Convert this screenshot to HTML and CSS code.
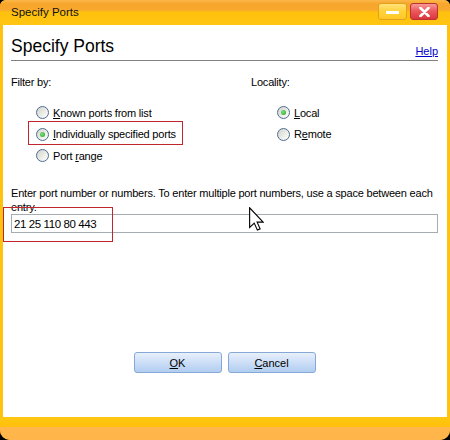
FILE: index.html
```html
<!DOCTYPE html>
<html>
<head>
<meta charset="utf-8">
<title>Specify Ports</title>
<link rel="stylesheet" href="styles.css">
</head>
<body>
<div class="window">
  <div class="titlebar">
    <span class="title">Specify Ports</span>
    <div class="controls">
      <span class="tbtn min"><span class="bar"></span></span>
      <span class="tbtn close">
        <svg width="11" height="10" viewBox="0 0 11 10"><path d="M1.5 1 L9.5 9 M9.5 1 L1.5 9" stroke="#fff" stroke-width="2.6" stroke-linecap="round"/></svg>
      </span>
    </div>
  </div>
  <div class="client">
    <div class="header">
      <h1>Specify Ports</h1>
      <a class="help">Help</a>
    </div>
    <div class="options">
      <div class="col filter">
        <div class="label">Filter by:</div>
        <div class="radios">
          <div class="radio-row"><span class="radio"></span><span><u>K</u>nown ports from list</span></div>
          <div class="radio-row"><span class="radio checked"></span><span><u>I</u>ndividually specified ports</span><span class="annot annot-1"></span></div>
          <div class="radio-row"><span class="radio"></span><span>Port <u>r</u>ange</span></div>
        </div>
      </div>
      <div class="col locality">
        <div class="label">Locality:</div>
        <div class="radios loc">
          <div class="radio-row"><span class="radio checked"></span><span><u>L</u>ocal</span></div>
          <div class="radio-row"><span class="radio"></span><span>R<u>e</u>mote</span></div>
        </div>
      </div>
    </div>
    <p class="instr">Enter port number or numbers. To enter multiple port numbers, use a space between each entry.</p>
    <div class="field">
      <input type="text" value="21 25 110 80 443">
      <span class="annot annot-2"></span>
    </div>
    <div class="buttons">
      <button class="btn"><u>O</u>K</button>
      <button class="btn"><u>C</u>ancel</button>
    </div>
    <svg class="cursor" width="15" height="24" viewBox="0 0 12 19"><path d="M0.5 0.5 V16.3 L4.2 12.8 L6.7 18.4 L8.9 17.4 L6.5 12 H11.3 Z" fill="#fff" stroke="#000" stroke-width="0.9" stroke-linejoin="miter"/></svg>
  </div>
  <div class="bottombar"></div>
</div>
</body>
</html>
```

FILE: styles.css
```css
body {
  margin: 0;
  background: #000;
  font-family: "Liberation Sans", Arial, sans-serif;
  font-size: 11px;
  letter-spacing: -0.2px;
  color: #000;
}

.window {
  width: 450px;
  height: 440px;
  display: flex;
  flex-direction: column;
  background: #ffc20e;
  border-radius: 6px 6px 10px 10px;
  overflow: hidden;
}

.titlebar {
  height: 25px;
  flex: none;
  box-sizing: border-box;
  display: flex;
  justify-content: space-between;
  align-items: flex-start;
  padding: 0 12px 0 11px;
  background: linear-gradient(#fbb849 0px, #f7a52c 4px, #f8a82e 10px, #ffc10d 12px, #ffc512 25px);
}

.title {
  font-size: 11.5px;
  letter-spacing: 0;
  line-height: 13px;
  margin-top: 6px;
  color: #111;
}

.controls {
  display: flex;
  gap: 3px;
  margin-top: 3px;
}

.tbtn {
  height: 17px;
  box-sizing: border-box;
  border-radius: 3px;
  display: flex;
  align-items: center;
  justify-content: center;
}

.min {
  width: 29px;
  background: linear-gradient(#ffe27a, #ffd23a 50%, #ffc825);
  border: 1px solid #e3a11c;
}

.min .bar {
  width: 13px;
  height: 3px;
  background: #fff;
  margin-top: 1px;
}

.close {
  width: 28px;
  background: linear-gradient(#f79a98, #ec5a5e 45%, #dc363d);
  border: 1px solid #b83232;
}

.client {
  flex: 1;
  margin: 0 3px;
  background: #fff;
  position: relative;
  padding: 10px 9px 0 8px;
  display: flex;
  flex-direction: column;
}

.header {
  display: flex;
  justify-content: space-between;
  align-items: flex-end;
  padding-bottom: 3px;
  border-bottom: 1px solid #808080;
}

.header h1 {
  margin: 0;
  font-size: 17.5px;
  font-weight: normal;
  line-height: 22px;
  letter-spacing: 0;
}

.help {
  color: #0000cc;
  text-decoration: underline;
  line-height: 13px;
  letter-spacing: 0;
  margin-bottom: -1px;
}

.options {
  display: flex;
  margin-top: 14px;
}

.filter {
  width: 240px;
}

.label {
  line-height: 14px;
}

.radios {
  margin-top: 13px;
  padding-left: 25px;
}

.radios.loc {
  padding-left: 26px;
}

.radio-row {
  display: flex;
  align-items: center;
  gap: 4px;
  height: 21.5px;
  position: relative;
}

.radio {
  flex: none;
  width: 13px;
  height: 13px;
  box-sizing: border-box;
  border-radius: 50%;
  border: 1px solid #4f6c90;
  background: linear-gradient(135deg, #d2d2cc 0%, #ecece8 55%, #ffffff 100%);
  display: flex;
  align-items: center;
  justify-content: center;
}

.radio.checked::after {
  content: "";
  width: 5px;
  height: 5px;
  border-radius: 50%;
  background: radial-gradient(circle at 40% 40%, #7be27b, #21a121);
}

.instr {
  margin: 19.5px 0 0;
  line-height: 14px;
}

.field {
  position: relative;
}

.field input {
  display: block;
  width: 100%;
  height: 19px;
  box-sizing: border-box;
  margin: 0;
  padding: 0 2px;
  border: 1px solid #a5acb2;
  font-family: "Liberation Sans", Arial, sans-serif;
  font-size: 11.5px;
  letter-spacing: -0.4px;
  color: #000;
  background: #fff;
  outline: none;
}

.annot {
  position: absolute;
  box-sizing: border-box;
  border: 1px solid #c0262c;
}

.annot-1 {
  left: -8px;
  top: -3px;
  width: 155px;
  height: 24px;
}

.annot-2 {
  left: -8px;
  top: -7px;
  width: 110px;
  height: 35px;
}

.buttons {
  display: flex;
  justify-content: center;
  gap: 6px;
  margin-top: 119px;
}

.btn {
  width: 88px;
  height: 21px;
  box-sizing: border-box;
  border: 1px solid #86a8d6;
  border-radius: 3px;
  background: linear-gradient(#e8f0fb, #cfe0f7 45%, #b1cdf1);
  font-family: "Liberation Sans", Arial, sans-serif;
  font-size: 11px;
  letter-spacing: 0;
  color: #000;
  padding: 0;
}

.cursor {
  position: absolute;
  left: 246px;
  top: 182px;
}

.bottombar {
  height: 23px;
  flex: none;
  background: linear-gradient(#ffc710 0px, #ffc00c 10px, #ffb64c 10.5px, #ffb54a 23px);
}
```
